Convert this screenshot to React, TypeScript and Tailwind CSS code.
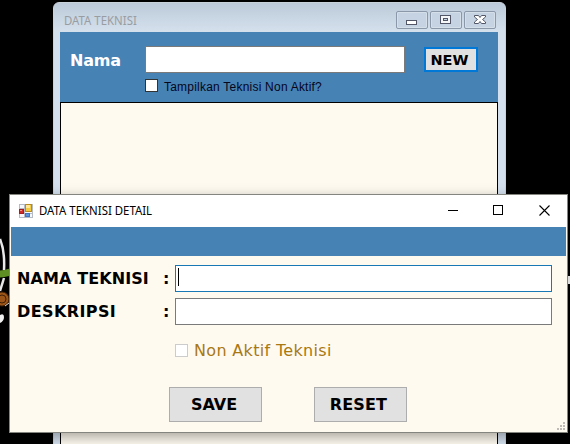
import type { ReactNode } from "react";

const verdana = "font-['DejaVu_Sans',sans-serif]";

function CaptionButton({ children }: { children: ReactNode }) {
  return (
    <div className="flex h-[18px] w-8 items-center justify-center rounded-[2px] border border-[#8b98aa] bg-[#c6d3e2] shadow-[inset_0_0_0_1px_#d5dfea]">
      <svg width="14" height="12" viewBox="0 0 14 12" shapeRendering="crispEdges">
        {children}
      </svg>
    </div>
  );
}

function ListWindow() {
  return (
    <section className="absolute left-[53px] top-[2px] h-[460px] w-[453px] rounded-t-[6px] border border-[#c9d1da] bg-linear-to-b from-[#bccad9] via-[#d4e0ec] via-[28px] to-[#d4e0ee] to-[60px] px-[6px]">
      <header className="flex h-[29px] items-start justify-between pl-[4px] pr-[3px] pt-[8px]">
        <h1 className="mt-[1px] origin-left scale-x-[0.95] whitespace-nowrap font-['Noto_Sans',sans-serif] text-[12px] leading-[18px] text-[#999da1]">DATA TEKNISI</h1>
        <div className="flex gap-[2px]">
          <CaptionButton>
            <rect x="1.5" y="6.5" width="10" height="4" rx="1" fill="#fff" stroke="#535666" />
          </CaptionButton>
          <CaptionButton>
            <rect x="1.5" y="1.5" width="10" height="8" fill="#f4f6f8" stroke="#535666" />
            <rect x="4.5" y="4.5" width="4" height="2" fill="#c6d3e2" stroke="#535666" />
          </CaptionButton>
          <CaptionButton>
            <path d="M1.5 1.5h4L7 3.500l1.500-2h4V3L9.500 5.500l3 2.500v1.500h-4L7 7.500l-1.500 2h-4V8L4.500 5.500l-3-2.500z" fill="#fff" stroke="#535666" shapeRendering="auto" />
          </CaptionButton>
        </div>
      </header>
      <div className="flex h-[70px] w-[438px] bg-[#4682b4] pl-[10px]">
        <label className={`${verdana} w-[75px] pt-[19px] text-[16px] font-bold leading-[20px] tracking-[-0.2px] text-white`}>Nama</label>
        <div className="w-[260px] pt-[14px]">
          <input className="block h-[27px] w-full border border-[#7a7a7a] bg-white outline-none" />
          <label className="mt-[6px] flex h-[13px] items-center gap-[6px]">
            <span className="size-[13px] shrink-0 border border-[#333] bg-white" />
            <span className="mt-[3px] whitespace-nowrap font-['Liberation_Sans',sans-serif] text-[12px] leading-[14px] tracking-[0.22px] text-[#06061c]">Tampilkan Teknisi Non Aktif?</span>
          </label>
        </div>
        <button className={`${verdana} ml-[19px] mt-[15px] h-[25px] w-[54px] border-2 border-[#0078d7] bg-[#e1e1e1] pr-[3px] text-[14.5px] font-bold leading-[20px] text-black`}>NEW</button>
      </div>
      <div className="h-[360px] w-[438px] border border-black bg-[#fffaf0]" />
    </section>
  );
}

function FormIcon() {
  return (
    <svg width="14" height="14" viewBox="0 0 14 14" shapeRendering="crispEdges">
      <path d="M.5.5h13v13H.5zM.5 4.500h5M5.500.5v13M5.500 9.500h8" fill="#f7f8fb" stroke="#b5bbc6" />
      <rect x="6.500" y=".5" width="6" height="7" fill="#f3cb45" stroke="#b88a20" />
      <rect x="7" y="1" width="4" height="3" fill="#ffe798" />
      <rect x=".5" y="5.500" width="4" height="4" fill="#cf2c29" stroke="#a51c20" />
      <rect x="1" y="6" width="2" height="1" fill="#f49184" />
      <rect x="6.500" y="9.500" width="4" height="3" fill="#5d93df" stroke="#4275bd" />
    </svg>
  );
}

type FieldProps = { label: string; tracking: string; frame: string; focused?: boolean };

function Field({ label, tracking, frame, focused = false }: FieldProps) {
  return (
    <div className="flex h-[27px] items-center">
      <label className={`${verdana} ${tracking} w-[146px] whitespace-nowrap text-[16px] font-bold leading-[20px]`}>{label}</label>
      <span className={`${verdana} w-[12px] text-[16px] font-bold leading-[20px]`}>:</span>
      <div className={`h-[27px] w-[377px] p-px ${frame}`}>
        <div className="h-full bg-white pl-[2px] pt-[2px]">
          {focused && <div className="h-[18px] w-px bg-black" />}
        </div>
      </div>
    </div>
  );
}

function DetailWindow() {
  return (
    <section className="absolute left-[9px] top-[194px] h-[239px] w-[559px] border border-[#85857f] bg-[#fffaf0] text-black shadow-[0_4px_12px_rgba(0,0,0,0.35)]">
      <header className="flex h-[32px] items-center bg-white pl-[9px] pr-[17px]">
        <FormIcon />
        <h2 className="ml-[6px] origin-left scale-x-[0.95] whitespace-nowrap font-['Noto_Sans',sans-serif] text-[12px] leading-[16px]">DATA TEKNISI DETAIL</h2>
        <svg className="ml-auto" width="102" height="12" viewBox="0 0 102 12" fill="none" stroke="#000">
          <path d="M0 5.500h10M45.500.5h9v9h-9z" shapeRendering="crispEdges" />
          <path d="M91.500.5l10 10m0-10l-10 10" strokeWidth="1.100" />
        </svg>
      </header>
      <div className="mx-px h-[29px] bg-[#4682b4]" />
      <form className="flex flex-col pl-[7px] pt-[9px]">
        <div className="flex flex-col gap-[6px]">
          <Field label="NAMA TEKNISI" tracking="tracking-[0.1px]" frame="bg-[#1878b6]" focused />
          <Field label="DESKRIPSI" tracking="tracking-[0.4px]" frame="bg-[#7a7a7a]" />
        </div>
        <label className={`${verdana} ml-[158px] mt-[15px] flex h-[20px] items-center gap-[6px] text-[16px] leading-[20px] tracking-[0.33px] text-[#a87813]`}>
          <span className="size-[13px] border border-[#ccc] bg-white" />
          <span className="mt-[2px]">Non Aktif Teknisi</span>
        </label>
        <div className={`${verdana} ml-[152px] mt-[27px] flex gap-[52px] text-[16px] font-bold`}>
          <button type="button" className="h-[35px] w-[93px] border border-[#adadad] bg-[#e1e1e1] pr-[3px]">SAVE</button>
          <button type="button" className="h-[35px] w-[93px] border border-[#adadad] bg-[#e1e1e1] pr-[4px] tracking-[0.15px]">RESET</button>
        </div>
      </form>
      <svg className="absolute bottom-[2px] right-[2px]" width="8" height="8" viewBox="0 0 8 8" fill="#bfbab5" shapeRendering="crispEdges">
        <path d="M6 0h2v2H6zM3 3h2v2H3zM6 3h2v2H6zM0 6h2v2H0zM3 6h2v2H3zM6 6h2v2H6z" />
      </svg>
    </section>
  );
}

function WallpaperLeft() {
  return (
    <svg className="absolute left-0 top-[235px]" width="9" height="95" viewBox="0 235 9 95" fill="none">
      <path d="M0 239Q5 251 4 270" stroke="#e9e9e9" strokeWidth="2.500" />
      <path d="M4 278L0 291" stroke="#e9e9e9" strokeWidth="2.500" />
      <path d="M0 274Q5 274 10 272" stroke="#5f8f24" strokeWidth="7" />
      <circle cx="2" cy="299" r="7" fill="#9b5518" stroke="#402006" />
      <circle cx="2" cy="299" r="4" stroke="#402006" />
      <path d="M5 306L9 303" stroke="#ddd" />
      <path d="M0 315Q4 313 4 317Q4 321 0 323z" fill="#f1f1f1" />
    </svg>
  );
}

export default function App() {
  return (
    <main className="relative h-[444px] w-[570px] overflow-hidden bg-black">
      <ListWindow />
      <DetailWindow />
      <WallpaperLeft />
      <div className="absolute left-[568px] top-[276px] h-[8px] w-[2px] bg-[#ddd]" />
    </main>
  );
}
